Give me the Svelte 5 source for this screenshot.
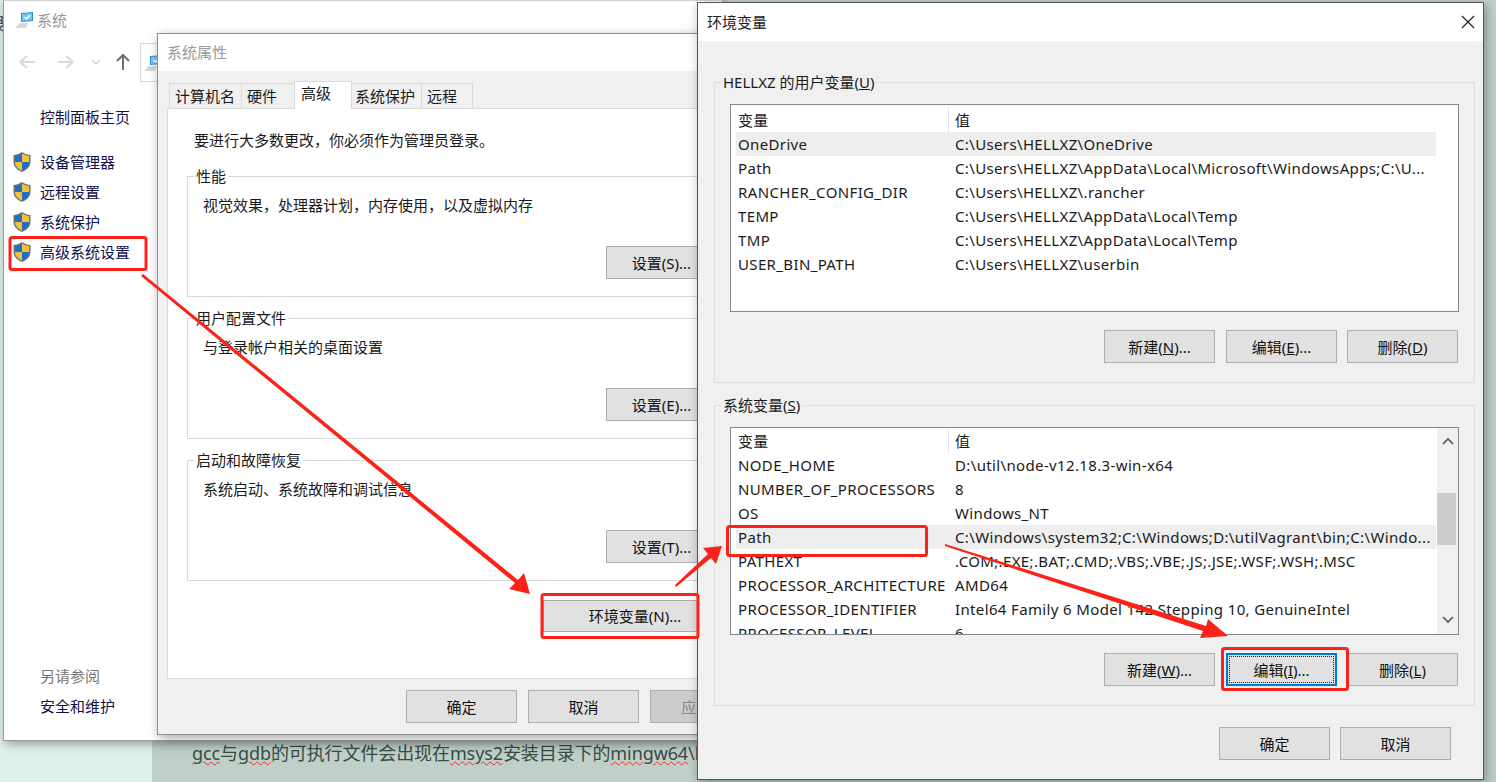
<script>
  const sideLinks = ['设备管理器', '远程设置', '系统保护', '高级系统设置']
  const tabs = ['计算机名', '硬件', '高级', '系统保护', '远程']
  const groups = [
    { title: '性能', text: '视觉效果，处理器计划，内存使用，以及虚拟内存', button: '设置(S)...' },
    { title: '用户配置文件', text: '与登录帐户相关的桌面设置', button: '设置(E)...' },
    { title: '启动和故障恢复', text: '系统启动、系统故障和调试信息', button: '设置(T)...' }
  ]
  const userVars = [
    ['OneDrive', 'C:\\Users\\HELLXZ\\OneDrive'],
    ['Path', 'C:\\Users\\HELLXZ\\AppData\\Local\\Microsoft\\WindowsApps;C:\\U...'],
    ['RANCHER_CONFIG_DIR', 'C:\\Users\\HELLXZ\\.rancher'],
    ['TEMP', 'C:\\Users\\HELLXZ\\AppData\\Local\\Temp'],
    ['TMP', 'C:\\Users\\HELLXZ\\AppData\\Local\\Temp'],
    ['USER_BIN_PATH', 'C:\\Users\\HELLXZ\\userbin']
  ]
  const sysVars = [
    ['NODE_HOME', 'D:\\util\\node-v12.18.3-win-x64'],
    ['NUMBER_OF_PROCESSORS', '8'],
    ['OS', 'Windows_NT'],
    ['Path', 'C:\\Windows\\system32;C:\\Windows;D:\\utilVagrant\\bin;C:\\Windo...'],
    ['PATHEXT', '.COM;.EXE;.BAT;.CMD;.VBS;.VBE;.JS;.JSE;.WSF;.WSH;.MSC'],
    ['PROCESSOR_ARCHITECTURE', 'AMD64'],
    ['PROCESSOR_IDENTIFIER', 'Intel64 Family 6 Model 142 Stepping 10, GenuineIntel'],
    ['PROCESSOR_LEVEL', '6']
  ]
</script>

{#snippet shield()}
  <svg class="shield" width="20" height="22" viewBox="0 0 20 22">
    <path d="M10 1 C7 3 4 4 1.500 4 V11 C1.500 16 6 19.500 10 21 C14 19.500 18.500 16 18.500 11 V4 C16 4 13 3 10 1 Z" fill="#6b7480" />
    <path d="M10 2.500 C7.500 4 5 5 3 5 V11 H10 Z" fill="#1f6fc4" />
    <path d="M10 2.500 C12.500 4 15 5 17 5 V11 H10 Z" fill="#f6bf3a" />
    <path d="M3 11 H10 V19.500 C6.500 18 3 15.500 3 11 Z" fill="#f6bf3a" />
    <path d="M17 11 H10 V19.500 C13.500 18 17 15.500 17 11 Z" fill="#1f6fc4" />
  </svg>
{/snippet}

{#snippet computer(size)}
  <svg width={size} height={size} viewBox="0 0 20 20">
    <path d="M1 18 L6 13 H14 L12 18 Z" fill="#d5d8da" />
    <path d="M7 3 L19 2 V11 L7 12 Z" fill="#2b8fd8" />
    <path d="M8 4 L18 3 V10 L8 11 Z" fill="#7cc4ef" />
    <path d="M10.500 7 L12.500 9 L16 5" stroke="#fff" stroke-width="1.500" fill="none" />
  </svg>
{/snippet}

{#snippet varList(rows, selected)}
  <div class="list-head row">
    <span>变量</span>
    <span class="val">值</span>
  </div>
  {#each rows as r, i}
    <div class="row" class:sel={i === selected}>
      <span>{r[0]}</span>
      <span class="val">{r[1]}</span>
    </div>
  {/each}
{/snippet}

<div class="desktop">
  <div class="page-bg">
    <div class="green"></div>
    <div class="doc">
      <span class="line"><i>gcc</i>与<i>gdb</i>的可执行文件会出现在<i>msys2</i>安装目录下的<i>mingw64</i>\bin</span>
    </div>
  </div>
  <div class="top-strip"></div>
  <span class="stray">录</span>

  <section class="win system">
    <header class="sys-title">
      {@render computer(20)}
      <span>系统</span>
    </header>
    <nav class="crumbs">
      <svg width="110" height="20" viewBox="0 0 110 20" fill="none">
        <path d="M16 10 H31 M16 10 L23 4 M16 10 L23 16" stroke="#d8d8d8" stroke-width="2" />
        <path d="M54 10 H69 M69 10 L62 4 M69 10 L62 16" stroke="#d8d8d8" stroke-width="2" />
        <path d="M88 8 L92 12 L96 8" stroke="#d8d8d8" stroke-width="1.500" />
      </svg>
      <svg class="up" width="18" height="20" viewBox="0 0 18 20" fill="none">
        <path d="M9 18 V3 M3 9 L9 3 L15 9" stroke="#707070" stroke-width="2" />
      </svg>
      <div class="address">{@render computer(20)}</div>
    </nav>
    <aside class="side">
      <a class="home">控制面板主页</a>
      <ul>
        {#each sideLinks as link}
          <li>{@render shield()}<a>{link}</a></li>
        {/each}
      </ul>
      <div class="also">
        <p>另请参阅</p>
        <a>安全和维护</a>
      </div>
    </aside>
  </section>

  <section class="win props">
    <header class="title">系统属性</header>
    <div class="body">
      <div class="tabs">
        {#each tabs as t, i}
          <span class="tab" class:active={i === 2}>{t}</span>
        {/each}
      </div>
      <div class="panel">
        <p class="lead">要进行大多数更改，你必须作为管理员登录。</p>
        {#each groups as g}
          <fieldset class="pgroup">
            <legend>{g.title}</legend>
            <p>{g.text}</p>
            <button>{g.button}</button>
          </fieldset>
        {/each}
        <button class="envbtn">环境变量(N)...</button>
      </div>
      <div class="actions">
        <button>确定</button>
        <button>取消</button>
        <button class="off">应用(A)</button>
      </div>
    </div>
  </section>

  <section class="win env">
    <header class="title env-title">
      <span>环境变量</span>
      <svg width="14" height="14" viewBox="0 0 14 14"><path d="M1 1 L13 13 M13 1 L1 13" stroke="#222" stroke-width="1.200" /></svg>
    </header>
    <div class="env-body">
      <fieldset class="egroup">
        <legend>HELLXZ 的用户变量(<u>U</u>)</legend>
        <div class="list">
          {@render varList(userVars, 0)}
        </div>
        <div class="btns">
          <button>新建(<u>N</u>)...</button>
          <button>编辑(<u>E</u>)...</button>
          <button>删除(<u>D</u>)</button>
        </div>
      </fieldset>
      <fieldset class="egroup second">
        <legend>系统变量(<u>S</u>)</legend>
        <div class="list scrolled">
          <div class="rows">
            {@render varList(sysVars, 3)}
          </div>
          <div class="scrollbar">
            <svg width="12" height="8" viewBox="0 0 12 8" fill="none"><path d="M1 7 L6 2 L11 7" stroke="#555" stroke-width="1.600" /></svg>
            <div class="thumb"></div>
            <svg width="12" height="8" viewBox="0 0 12 8" fill="none"><path d="M1 1 L6 6 L11 1" stroke="#555" stroke-width="1.600" /></svg>
          </div>
        </div>
        <div class="btns">
          <button>新建(<u>W</u>)...</button>
          <button class="focus"><span>编辑(<u>I</u>)...</span></button>
          <button>删除(<u>L</u>)</button>
        </div>
      </fieldset>
      <div class="btns footer">
        <button>确定</button>
        <button>取消</button>
      </div>
    </div>
  </section>

  <svg class="marks" width="1496" height="782" viewBox="0 0 1496 782" fill="none">
    <g stroke="#fb2318" stroke-width="3">
      <rect x="10" y="237.500" width="136" height="32" rx="2" />
      <rect x="542" y="594.500" width="156" height="43" rx="2" />
      <rect x="727.500" y="526.500" width="199" height="29" rx="2" />
      <rect x="1222.500" y="648.500" width="125" height="41" rx="2" />
    </g>
    <g fill="#fb2318">
      <path d="M141 276 L143 274 L518 580 L524 573 L530 594 L509 589 L515 583 Z" />
      <path d="M676 587 L675 585 L708 554 L703 548 L722 546 L716 564 L711 558 Z" />
      <path d="M945 546 L945 544 L1206 626 L1208 619 L1228 636 L1200 638 L1203 631 Z" />
    </g>
  </svg>
</div>

<style>
  :global(body) {
    margin: 0;
    overflow: hidden;
    font-family: "Noto Sans", "Noto Sans CJK SC", sans-serif;
  }
  .desktop {
    position: relative;
    width: 1496px;
    height: 782px;
    overflow: hidden;
    font-size: 15px;
    line-height: 20px;
    color: #1a1a1a;
    background: #eee;
  }
  .page-bg {
    position: absolute;
    inset: 0;
    display: flex;
  }
  .green {
    width: 152px;
    background: #dff2ea;
  }
  .doc {
    flex: 1;
    background: #bed0c8;
    display: flex;
    align-items: flex-end;
    padding: 0 0 18px 40px;
  }
  .line {
    font-size: 18px;
    line-height: 22px;
    letter-spacing: -0.1px;
    color: #3a4a45;
    white-space: nowrap;
  }
  .line i {
    font-style: normal;
    text-decoration: underline wavy #e8312a 1px;
  }
  .top-strip {
    position: absolute;
    top: 0;
    left: 325px;
    width: 288px;
    height: 2px;
    background: #c9302c;
  }
  .stray {
    position: absolute;
    left: -12px;
    top: 14px;
    font-size: 18px;
    color: #555;
  }
  .win {
    position: absolute;
    box-sizing: border-box;
    box-shadow: 2px 3px 10px rgba(0, 0, 0, 0.35);
    background: #fff;
  }
  button {
    font: inherit;
    color: #111;
    background: #e1e1e1;
    border: 1px solid #adadad;
    padding: 0;
    width: 111px;
    height: 33px;
    flex: none;
  }

  /* system window */
  .system {
    left: 3px;
    top: 0;
    width: 720px;
    height: 741px;
    border: 1px solid #9a9a9a;
    border-top-color: #cfcfcf;
  }
  .sys-title {
    display: flex;
    align-items: center;
    gap: 3px;
    height: 38px;
    padding-left: 10px;
    color: #999;
  }
  .crumbs {
    display: flex;
    align-items: center;
    height: 42px;
    margin-top: 2px;
  }
  .address {
    margin-left: 8px;
    box-sizing: border-box;
    width: 200px;
    height: 39px;
    padding: 9px 2px;
    border: 1px solid #d9d9d9;
  }
  .side {
    display: flex;
    flex-direction: column;
    height: 657px;
    padding: 24px 0 0 8px;
    box-sizing: border-box;
  }
  .side a {
    color: #10104a;
  }
  .home {
    margin-left: 28px;
  }
  .side ul {
    list-style: none;
    margin: 25px 0 0;
    padding: 0;
    display: flex;
    flex-direction: column;
    gap: 10px;
  }
  .side li {
    display: flex;
    align-items: center;
    gap: 8px;
    height: 20px;
  }
  .also {
    margin-top: auto;
    margin-bottom: 24px;
    padding-left: 28px;
  }
  .also p {
    margin: 0 0 10px;
    color: #777;
  }

  /* system properties */
  .props {
    left: 157px;
    top: 33px;
    width: 640px;
    height: 702px;
    border: 1px solid #8f8f8f;
  }
  .title {
    height: 37px;
    padding: 8px 0 0 9px;
    box-sizing: border-box;
    color: #999;
  }
  .body {
    height: 663px;
    background: #f0f0f0;
    padding: 11px 10px 0 9px;
    box-sizing: border-box;
  }
  .tabs {
    display: flex;
    align-items: flex-end;
    height: 26px;
    padding-left: 3px;
  }
  .tab {
    box-sizing: border-box;
    width: 54px;
    height: 25px;
    padding: 2px 0 0 5px;
    background: #f0f0f0;
    border: 1px solid #d9d9d9;
    border-bottom: none;
    margin-left: -1px;
    white-space: nowrap;
  }
  .tab:first-child {
    width: 73px;
  }
  .tab:nth-child(4) {
    width: 71px;
    padding-left: 3px;
  }
  .tab:last-child {
    width: 52px;
  }
  .tab.active {
    width: 58px;
    height: 28px;
    background: #fff;
    position: relative;
    padding: 1px 0 0 6px;
    margin-bottom: -1px;
    z-index: 1;
  }
  .panel {
    box-sizing: border-box;
    height: 571px;
    background: #fff;
    border: 1px solid #d9d9d9;
    padding: 21px 19px 0;
    display: flex;
    flex-direction: column;
  }
  .lead {
    margin: 0 0 16px 7px;
  }
  .pgroup {
    box-sizing: border-box;
    height: 131px;
    margin: 0 0 11px;
    padding: 9px 15px 0;
    border: 1px solid #d9d9d9;
    flex: none;
  }
  .pgroup legend {
    padding: 0 2px;
    margin-left: -9px;
  }
  .pgroup p {
    margin: 0 0 31px;
  }
  .pgroup button {
    display: block;
    margin-left: 403px;
  }
  .envbtn {
    align-self: flex-start;
    margin: 8px 0 0 356px;
    width: 184px;
    height: 32px;
  }
  .actions {
    display: flex;
    gap: 11px;
    padding: 11px 0 0 239px;
  }
  .off {
    background: #ccc;
    color: #888;
  }

  /* environment variables */
  .env {
    left: 697px;
    top: 2px;
    width: 787px;
    height: 778px;
    border: 1px solid #555;
    background: #f0f0f0;
  }
  .env-title {
    display: flex;
    justify-content: space-between;
    align-items: flex-start;
    height: 38px;
    background: #fff;
    color: #222;
    padding: 9px 8px 0 9px;
  }
  .env-title svg {
    margin-top: 3px;
  }
  .env-body {
    padding: 31px 8px 0 16px;
  }
  .egroup {
    box-sizing: border-box;
    height: 311px;
    margin: 0;
    padding: 12px 15px 0;
    border: 1px solid #dcdcdc;
  }
  .egroup legend {
    padding: 0 2px;
    margin-left: -9px;
  }
  .second {
    margin-top: 12px;
  }
  .list {
    box-sizing: border-box;
    height: 208px;
    border: 1px solid #828790;
    background: #fff;
    padding: 3px 0 0 5px;
    overflow: hidden;
  }
  .scrolled {
    display: flex;
    padding-top: 1px;
    padding-right: 0;
  }
  .rows {
    flex: 1;
    min-width: 0;
  }
  .row {
    display: grid;
    grid-template-columns: 212px 1fr;
    height: 24px;
    line-height: 24px;
    letter-spacing: 0.36px;
    white-space: nowrap;
    width: 700px;
  }
  .row span {
    padding-left: 2px;
  }
  .list-head .val {
    border-left: 1px solid #e2e2e2;
    padding-left: 6px !important;
  }
  .val {
    padding-left: 7px !important;
  }
  .sel {
    background: #eeeeee;
  }
  .scrollbar {
    width: 21px;
    margin: -1px 0 0 auto;
    background: #f0f0f0;
    position: relative;
    display: flex;
    flex-direction: column;
    align-items: center;
    justify-content: space-between;
    padding: 9px 0 10px;
    box-sizing: border-box;
    height: 206px;
    flex: none;
  }
  .thumb {
    position: absolute;
    top: 65px;
    left: 0;
    width: 19px;
    height: 52px;
    background: #cdcdcd;
  }
  .btns {
    display: flex;
    justify-content: flex-end;
    gap: 10px;
    margin: 18px 1px 0 0;
  }
  .btns button:first-child {
    margin-right: 1px;
  }
  .focus {
    border: 2px solid #0078d7;
    padding: 1px;
  }
  .focus span {
    display: flex;
    align-items: center;
    justify-content: center;
    height: 100%;
    outline: 1px dotted #222;
    outline-offset: -1px;
  }
  .footer {
    margin: 21px 0 0;
    padding-right: 24px;
  }
  .footer button:first-child {
    margin-right: 0;
  }
  .marks {
    position: absolute;
    inset: 0;
    pointer-events: none;
  }
</style>
